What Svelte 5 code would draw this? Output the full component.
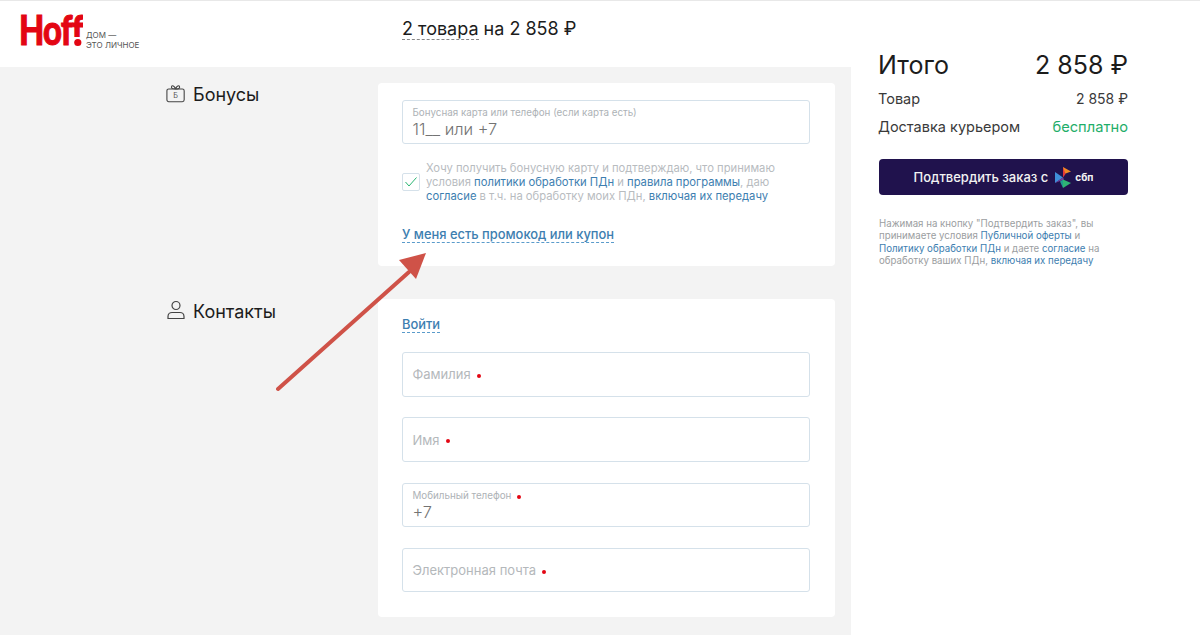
<script>
  const fields = [
    { label: "Фамилия", small: false },
    { label: "Имя", small: false },
    { label: "Мобильный телефон", small: true, value: "+7" },
    { label: "Электронная почта", small: false },
  ];
</script>

<div class="page">
  <div class="main">
    <header>
      <div class="logo">
        <span class="hoff">Hof<span class="last-f"><span>f</span></span></span>
        <span class="slogan">ДОМ —<br />ЭТО ЛИЧНОЕ</span>
      </div>
      <div class="count"><span class="dashed-dark">2 товара</span> на 2 858 ₽</div>
    </header>

    <div class="content">
      <section class="row first">
        <h2>
          <svg width="20" height="19" viewBox="0 0 22 20" fill="none" stroke="#444" stroke-width="1.2">
            <rect x="1" y="5" width="19" height="14" rx="2" />
            <path d="M7 1.5c2 0 3 2 3.5 3.5C8.5 5 6 4.5 6 3c0-1 .5-1.5 1-1.5zM14 1.500c-2 0-3 2-3.500 3.500 2 0 4.500-.5 4.500-2 0-1-.5-1.500-1-1.500z" />
            <text x="10.500" y="15.500" font-size="8" fill="#555" stroke="none" text-anchor="middle" font-family="Inter">Б</text>
          </svg>
          Бонусы
        </h2>
        <div class="card">
          <div class="field filled">
            <span class="small">Бонусная карта или телефон (если карта есть)</span>
            <span class="value">11__ или +7</span>
          </div>
          <div class="agree">
            <span class="check">
              <svg width="14" height="12" viewBox="0 0 14 12" fill="none" stroke="#2bb673" stroke-width="1"><path d="M1.500 6l3.500 4 7.500-8.500" /></svg>
            </span>
            <p>Хочу получить бонусную карту и подтверждаю, что принимаю условия <a href="#a">политики обработки ПДн</a> и <a href="#a">правила программы</a>, даю <a href="#a">согласие</a> в т.ч. на обработку моих ПДн, <a href="#a">включая их передачу</a></p>
          </div>
          <a class="promo" href="#a">У меня есть промокод или купон</a>
        </div>
      </section>

      <section class="row">
        <h2>
          <svg width="20" height="20" viewBox="0 0 20 20" fill="none" stroke="#444" stroke-width="1.2">
            <circle cx="10" cy="5.500" r="4" />
            <path d="M2 18.500v-2c0-2.500 2-4 4-4h8c2 0 4 1.500 4 4v2z" />
          </svg>
          Контакты
        </h2>
        <div class="card contacts">
          <a class="login" href="#a">Войти</a>
          {#each fields as f}
            <div class="field" class:filled={f.small}>
              {#if f.small}
                <span class="small">{f.label}<i class="req"></i></span>
                <span class="value">{f.value}</span>
              {:else}
                <span class="placeholder">{f.label}<i class="req"></i></span>
              {/if}
            </div>
          {/each}
        </div>
      </section>
    </div>
  </div>

  <aside>
    <div class="total"><span>Итого</span><span>2 858 ₽</span></div>
    <div class="line"><span>Товар</span><span class="price">2 858 ₽</span></div>
    <div class="line"><span>Доставка курьером</span><span class="free">бесплатно</span></div>
    <button>
      Подтвердить заказ с
      <svg width="16" height="21" viewBox="0 0 16 21">
        <path d="M0 5l8 5.500L0 16z" fill="#3f8fd8" />
        <path d="M0 16l8-5.500 1 2z" fill="#7a3fa0" />
        <path d="M8 0l8 4.500-8 3z" fill="#f08a24" />
        <path d="M8 0v10.500l2.500-3.500z" fill="#e5383b" />
        <path d="M8 21l8-5-8-3.500z" fill="#2fb574" />
        <path d="M8 21v-8.500l-3 2z" fill="#1f9e8f" />
      </svg>
      <span class="sbp">сбп</span>
    </button>
    <p class="legal">Нажимая на кнопку "Подтвердить заказ", вы принимаете условия <a href="#a">Публичной оферты</a> и <a href="#a">Политику обработки ПДн</a> и даете <a href="#a">согласие</a> на обработку ваших ПДн, <a href="#a">включая их передачу</a></p>
  </aside>

  <svg class="arrow" width="200" height="170" viewBox="0 0 200 170">
    <path d="M2 143L133 26" stroke="#cf5248" stroke-width="4" stroke-linecap="round" />
    <path d="M150 7L123 14L140 33z" fill="#cf5248" />
  </svg>
</div>

<style>
  :global(body) {
    background: #fff;
  }
  .page {
    position: relative;
    display: grid;
    grid-template-columns: 851px 349px;
    height: 635px;
    overflow: hidden;
    border-top: 1px solid #e8e8e8;
    box-sizing: border-box;
    font-family: Inter, "Liberation Sans", sans-serif;
    color: #1c1c1c;
  }
  .main {
    display: flex;
    flex-direction: column;
  }
  header {
    display: flex;
    height: 66px;
    flex: none;
  }
  .logo {
    position: relative;
    display: flex;
    align-items: flex-end;
    width: 402px;
    height: 48px;
    padding-left: 19px;
    box-sizing: border-box;
  }
  .hoff {
    display: inline-flex;
    width: 67px;
    flex: none;
    font-family: Lato, "Liberation Sans", sans-serif;
    font-weight: 900;
    font-size: 41px;
    line-height: 36px;
    height: 36px;
    margin-bottom: 1px;
    letter-spacing: -1px;
    color: #e30613;
    -webkit-text-stroke: 1px #e30613;
    transform: scaleX(0.8);
    transform-origin: left center;
  }
  .last-f {
    position: relative;
    display: inline-block;
    height: 26px;
  }
  .last-f span {
    display: block;
    height: 25px;
    overflow: hidden;
  }
  .last-f::after {
    content: "";
    position: absolute;
    left: 3px;
    top: 27px;
    width: 9px;
    height: 7px;
    border-radius: 50%;
    background: #e30613;
  }
  .slogan {
    font-size: 8px;
    line-height: 9.500px;
    color: #555;
    margin-bottom: -1px;
  }
  .count {
    font-size: 18px;
    line-height: 22px;
    padding-top: 17px;
  }
  .dashed-dark {
    border-bottom: 1px dashed #888;
  }
  .content {
    flex: 1;
    background: #f3f3f3;
    padding: 16px 16px 0 166px;
    display: flex;
    flex-direction: column;
    gap: 33px;
  }
  .row {
    display: grid;
    grid-template-columns: 212px 457px;
  }
  h2 {
    display: flex;
    align-items: flex-start;
    gap: 7px;
    margin: 0;
    font-size: 18px;
    font-weight: 400;
    line-height: 24px;
  }
  .row:not(.first) h2 {
    line-height: 26px;
  }
  h2 svg {
    flex: none;
    margin-top: 1px;
  }
  .card {
    background: #fff;
    border-radius: 4px;
    padding: 16.500px 25px 0 24px;
    box-sizing: border-box;
    height: 183px;
  }
  .contacts {
    height: 318px;
    padding-top: 14px;
  }
  .field {
    height: 44.500px;
    border: 1.500px solid #d5e1ea;
    border-radius: 3px;
    box-sizing: border-box;
    padding: 0 9.500px;
    display: flex;
    flex-direction: column;
    justify-content: center;
  }
  .field.filled {
    padding-top: 2px;
  }
  .field + .field {
    margin-top: 20.800px;
  }
  .login + .field {
    margin-top: 19px;
  }
  .small {
    font-size: 9.800px;
    line-height: 13px;
    color: #adb2b6;
  }
  .value {
    font-size: 16.400px;
    line-height: 20px;
    color: #737373;
    font-weight: 300;
  }
  .placeholder {
    font-size: 13px;
    color: #b4b8bb;
  }
  .req {
    display: inline-block;
    width: 4px;
    height: 4px;
    margin-left: 6px;
    border-radius: 50%;
    background: #e30613;
    vertical-align: middle;
  }
  .agree {
    display: flex;
    align-items: center;
    gap: 6px;
    margin-top: 16.500px;
  }
  .check {
    flex: none;
    width: 18px;
    height: 18px;
    box-sizing: border-box;
    border: 1px solid #d5e1ea;
    border-radius: 2px;
    display: flex;
    align-items: center;
    justify-content: center;
  }
  .agree p {
    margin: 0;
    font-size: 11.240px;
    line-height: 14px;
    color: #b8bcbf;
  }
  a {
    color: #3d7eb0;
    text-decoration: none;
  }
  .promo,
  .login {
    display: inline-block;
    font-size: 12.900px;
    line-height: 15px;
    border-bottom: 1px dashed #5a9bcb;
    font-weight: 500;
  }
  .promo {
    margin-top: 24.500px;
  }
  aside {
    padding: 0 72px 0 28px;
    font-size: 14.500px;
  }
  .total {
    display: flex;
    justify-content: space-between;
    margin-left: -1px;
    font-size: 25px;
    line-height: 30px;
    padding-top: 49px;
  }
  .line {
    display: flex;
    justify-content: space-between;
    margin-left: -1px;
    line-height: 18px;
    margin-top: 10px;
    color: #3a3a3a;
  }
  .price {
    font-size: 14px;
  }
  .free {
    color: #1fae6a;
    font-size: 14.700px;
  }
  button {
    display: flex;
    align-items: center;
    justify-content: center;
    width: 100%;
    height: 36px;
    margin-top: 23px;
    border: 0;
    border-radius: 4px;
    background: #20124d;
    color: #f2f2f2;
    font-family: inherit;
    font-size: 13px;
    font-weight: 500;
  }
  button svg {
    margin: 0 4px 0 7px;
  }
  .sbp {
    font-size: 10px;
    font-weight: 700;
  }
  .legal {
    margin: 23px 0 0;
    max-width: 232px;
    font-size: 9.700px;
    line-height: 12.300px;
    color: #9b9ea1;
  }
  .arrow {
    position: absolute;
    left: 276px;
    top: 245px;
    pointer-events: none;
  }
</style>
